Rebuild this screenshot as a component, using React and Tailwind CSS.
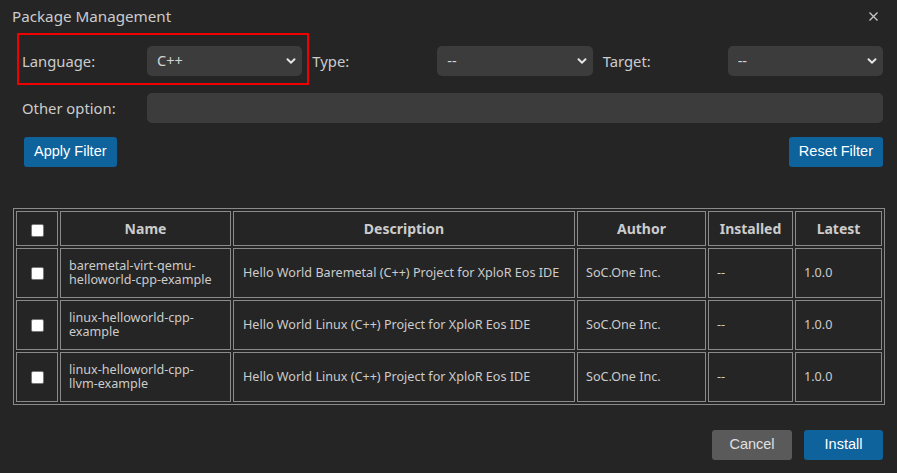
import React from 'react';

const packages = [
  {
    name: 'baremetal-virt-qemu-helloworld-cpp-example',
    description: 'Hello World Baremetal (C++) Project for XploR Eos IDE',
  },
  {
    name: 'linux-helloworld-cpp-example',
    description: 'Hello World Linux (C++) Project for XploR Eos IDE',
  },
  {
    name: 'linux-helloworld-cpp-llvm-example',
    description: 'Hello World Linux (C++) Project for XploR Eos IDE',
  },
];

const Chevron = () => (
  <svg
    className="pointer-events-none absolute right-[6px] top-1/2 -translate-y-1/2"
    width="10"
    height="8"
    viewBox="0 0 10 8"
    fill="none"
  >
    <path d="M1.5 2.2 L5 5.6 L8.5 2.2" stroke="#e6e6e6" strokeWidth="2" strokeLinecap="round" />
  </svg>
);

const Select = ({ value, options }) => (
  <div className="relative flex-1 h-[30px]">
    <select
      defaultValue={value}
      className="appearance-none w-full h-full rounded-[5px] bg-[#3c3c3c] text-[#d4d4d4] text-[14.5px] pl-[10px] pr-6 outline-none"
    >
      {options.map((o) => (
        <option key={o}>{o}</option>
      ))}
    </select>
    <Chevron />
  </div>
);

const Field = ({ label, children }) => (
  <div className="flex-1 flex items-center">
    <label className="w-[125px] shrink-0 text-[14.8px] text-[#cccccc]">{label}</label>
    {children}
  </div>
);

const Checkbox = () => (
  <input
    type="checkbox"
    className="appearance-none w-[13px] h-[13px] bg-white rounded-[2px] border border-[#767676] align-middle"
  />
);

const cell = 'border border-[#8a8a8a] px-2 text-[12.6px] leading-[14px] text-[#cccccc] align-middle';
const head = 'border border-[#8a8a8a] h-[35px] text-[14px] font-bold text-[#cccccc] text-center';

export default function App() {
  return (
    <div
      className="relative w-[897px] h-[473px] bg-[#252525] overflow-hidden"
      style={{ fontFamily: '"Noto Sans", "Open Sans", sans-serif' }}
    >
      <div className="flex items-center justify-between h-[32px] pl-[12px] pr-[19px]">
        <h1 className="text-[15.2px] text-[#cccccc]">Package Management</h1>
        <button>
          <svg width="9" height="9" viewBox="0 0 9 9">
            <path d="M0.5 0.5 L8.5 8.5 M8.5 0.5 L0.5 8.5" stroke="#c8c8c8" strokeWidth="1.3" />
          </svg>
        </button>
      </div>

      <div className="pl-[22px] pr-[14px] pt-[14px]">
        <div className="flex gap-[10px]">
          <Field label="Language:">
            <Select value="C++" options={['--', 'C', 'C++', 'Rust']} />
          </Field>
          <Field label="Type:">
            <Select value="--" options={['--']} />
          </Field>
          <Field label="Target:">
            <Select value="--" options={['--']} />
          </Field>
        </div>

        <div className="flex items-center mt-[17px]">
          <label className="w-[125px] shrink-0 text-[14.8px] text-[#cccccc]">Other option:</label>
          <input className="flex-1 h-[30px] rounded-[5px] bg-[#3c3c3c] text-[#d4d4d4] text-[14px] px-[10px] outline-none" />
        </div>

        <div
          className="flex justify-between mt-[14px] pl-[2px]"
          style={{ fontFamily: '"Liberation Sans", Arial, sans-serif' }}
        >
          <button className="h-[30px] px-[10px] rounded-[3px] bg-[#0e639c] text-white text-[14.5px]">
            Apply Filter
          </button>
          <button className="h-[30px] px-[10px] rounded-[3px] bg-[#0e639c] text-white text-[14.5px]">
            Reset Filter
          </button>
        </div>
      </div>

      <div className="pl-[13px] pr-[12px] mt-[41px]">
        <table className="w-[872px] border-separate border-spacing-[2px] border border-[#8a8a8a] table-fixed">
          <colgroup>
            <col className="w-[42px]" />
            <col className="w-[171px]" />
            <col className="w-[342px]" />
            <col className="w-[129px]" />
            <col className="w-[85px]" />
            <col className="w-[87px]" />
          </colgroup>
          <thead>
            <tr>
              <th className={head}>
                <Checkbox />
              </th>
              <th className={head}>Name</th>
              <th className={head}>Description</th>
              <th className={head}>Author</th>
              <th className={head}>Installed</th>
              <th className={head}>Latest</th>
            </tr>
          </thead>
          <tbody>
            {packages.map((p) => (
              <tr key={p.name} className="h-[50px]">
                <td className={`${cell} text-center`}>
                  <Checkbox />
                </td>
                <td className={cell}>{p.name}</td>
                <td className={`${cell} pl-[9px]`}>{p.description}</td>
                <td className={cell}>SoC.One Inc.</td>
                <td className={cell}>--</td>
                <td className={cell}>1.0.0</td>
              </tr>
            ))}
          </tbody>
        </table>
      </div>

      <div
        className="flex justify-end gap-[12px] pr-[14px] mt-[25px]"
        style={{ fontFamily: '"Liberation Sans", Arial, sans-serif' }}
      >
        <button className="w-[80px] h-[30px] rounded-[3px] bg-[#5a5a5a] text-[#e0e0e0] text-[14.5px]">
          Cancel
        </button>
        <button className="w-[79px] h-[30px] rounded-[3px] bg-[#0e639c] text-white text-[14.5px]">
          Install
        </button>
      </div>

      <div className="absolute left-[17px] top-[33px] w-[292px] h-[52px] border-2 border-[#f00000] pointer-events-none" />
    </div>
  );
}
